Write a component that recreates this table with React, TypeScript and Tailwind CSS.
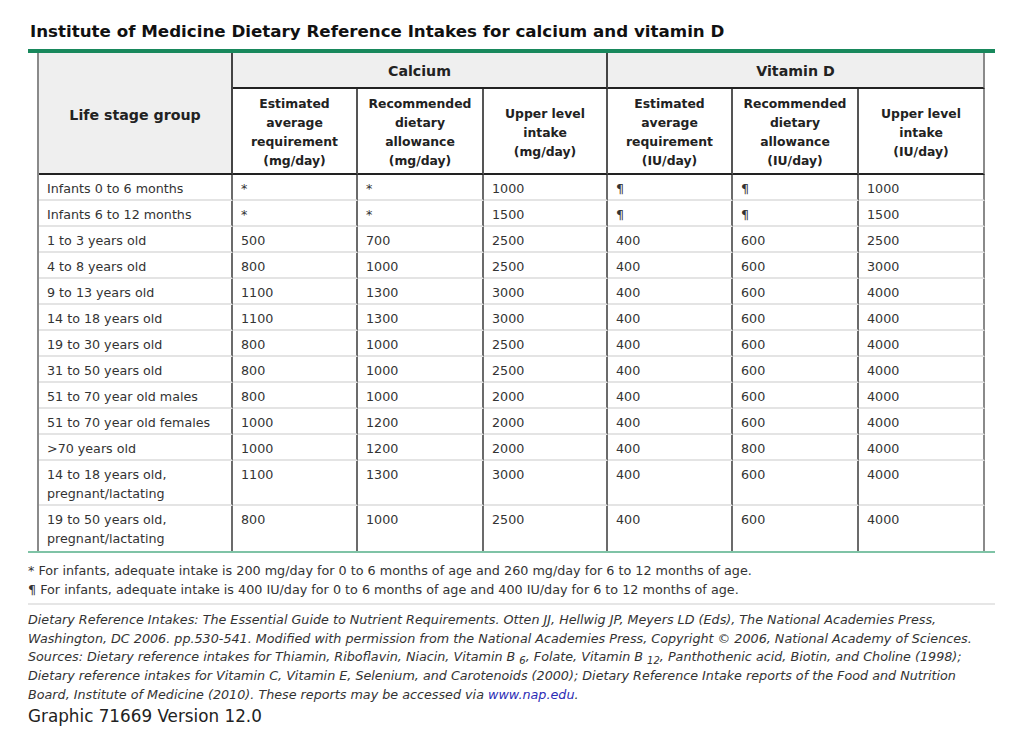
type Row = { group: string[]; values: string[] };

const rows: Row[] = [
  { group: ["Infants 0 to 6 months"], values: ["*", "*", "1000", "¶", "¶", "1000"] },
  { group: ["Infants 6 to 12 months"], values: ["*", "*", "1500", "¶", "¶", "1500"] },
  { group: ["1 to 3 years old"], values: ["500", "700", "2500", "400", "600", "2500"] },
  { group: ["4 to 8 years old"], values: ["800", "1000", "2500", "400", "600", "3000"] },
  { group: ["9 to 13 years old"], values: ["1100", "1300", "3000", "400", "600", "4000"] },
  { group: ["14 to 18 years old"], values: ["1100", "1300", "3000", "400", "600", "4000"] },
  { group: ["19 to 30 years old"], values: ["800", "1000", "2500", "400", "600", "4000"] },
  { group: ["31 to 50 years old"], values: ["800", "1000", "2500", "400", "600", "4000"] },
  { group: ["51 to 70 year old males"], values: ["800", "1000", "2000", "400", "600", "4000"] },
  { group: ["51 to 70 year old females"], values: ["1000", "1200", "2000", "400", "600", "4000"] },
  { group: [">70 years old"], values: ["1000", "1200", "2000", "400", "800", "4000"] },
  { group: ["14 to 18 years old,", "pregnant/lactating"], values: ["1100", "1300", "3000", "400", "600", "4000"] },
  { group: ["19 to 50 years old,", "pregnant/lactating"], values: ["800", "1000", "2500", "400", "600", "4000"] },
];

const subHeads: string[][] = [
  ["Estimated", "average", "requirement", "(mg/day)"],
  ["Recommended", "dietary", "allowance", "(mg/day)"],
  ["Upper level", "intake", "(mg/day)"],
  ["Estimated", "average", "requirement", "(IU/day)"],
  ["Recommended", "dietary", "allowance", "(IU/day)"],
  ["Upper level", "intake", "(IU/day)"],
];

export default function App() {
  return (
    <div className="w-[1024px] h-[750px] bg-white pl-[28px] pt-[21px] text-[#333] font-['DejaVu_Sans',Verdana,sans-serif]">
      <h1 className="pl-[2px] text-[16.7px] leading-[20px] font-bold text-[#111]">
        Institute of Medicine Dietary Reference Intakes for calcium and vitamin D
      </h1>
      <div className="mt-[8px] w-[967px] h-[4px] bg-[#18885c]" />

      <div className="ml-[9px] w-[948px] grid grid-cols-[194px_125px_126px_124px_125px_126px_126px] border-l-2 border-[#8a8a8a]">
        {/* header */}
        <div className="row-span-2 flex items-center justify-center bg-[#efefef] border-r-2 border-b-2 border-r-[#444] border-b-[#222] pt-[5px] text-[14.2px] font-bold text-[#222]">
          Life stage group
        </div>
        <div className="col-span-3 h-[36px] flex items-center justify-center bg-[#efefef] border-r-2 border-b-2 border-r-[#444] border-b-[#222] pt-[3px] text-[14.2px] font-bold text-[#222]">
          Calcium
        </div>
        <div className="col-span-3 h-[36px] flex items-center justify-center bg-[#efefef] border-r-2 border-b-2 border-r-[#8a8a8a] border-b-[#222] pt-[3px] text-[14.2px] font-bold text-[#222]">
          Vitamin D
        </div>
        {subHeads.map((lines, i) => (
          <div
            key={i}
            className={`h-[86px] flex flex-col items-center justify-center border-r-2 border-b-2 border-b-[#222] pt-[2px] text-[12.4px] leading-[19px] font-bold text-[#222] ${
              i === 5 ? "border-r-[#8a8a8a]" : "border-r-[#555]"
            }`}
          >
            {lines.map((l) => (
              <span key={l}>{l}</span>
            ))}
          </div>
        ))}

        {/* body */}
        {rows.map((row, r) => {
          const last = r === rows.length - 1;
          const cells = [row.group, ...row.values.map((v) => [v])];
          return cells.map((lines, c) => (
            <div
              key={`${r}-${c}`}
              className={`pl-[8px] pt-[4px] pb-[1px] text-[12.7px] leading-[19px] border-r-2 ${
                c === 6 ? "border-r-[#8a8a8a]" : "border-r-[#6b6b6b]"
              } ${last ? "pb-[3px]" : "border-b-2 border-b-[#e4e4e4]"}`}
            >
              {lines.map((l, k) => (
                <div key={k}>{l}</div>
              ))}
              {row.group.length > 1 && lines.length === 1 ? <div>&nbsp;</div> : null}
            </div>
          ));
        })}
      </div>
      <div className="w-[967px] h-[2px] bg-[#7fc3a6]" />

      <div className="mt-[8px] text-[12.75px] leading-[19px] text-[#333]">
        <p>* For infants, adequate intake is 200 mg/day for 0 to 6 months of age and 260 mg/day for 6 to 12 months of age.</p>
        <p>¶ For infants, adequate intake is 400 IU/day for 0 to 6 months of age and 400 IU/day for 6 to 12 months of age.</p>
      </div>
      <div className="mt-[4px] w-[967px] h-[2px] bg-[#e6e6e6]" />

      <p className="mt-[6px] italic text-[12.74px] leading-[18.7px] text-[#333]">
        Dietary Reference Intakes: The Essential Guide to Nutrient Requirements. Otten JJ, Hellwig JP, Meyers LD (Eds), The National Academies Press,
        <br />
        Washington, DC 2006. pp.530-541. Modified with permission from the National Academies Press, Copyright © 2006, National Academy of Sciences.
        <br />
        Sources: Dietary reference intakes for Thiamin, Riboflavin, Niacin, Vitamin B <sub className="text-[10px]">6</sub>, Folate, Vitamin B <sub className="text-[10px]">12</sub>, Panthothenic acid, Biotin, and Choline (1998);
        <br />
        Dietary reference intakes for Vitamin C, Vitamin E, Selenium, and Carotenoids (2000); Dietary Reference Intake reports of the Food and Nutrition
        <br />
        Board, Institute of Medicine (2010). These reports may be accessed via <span className="text-[#2b2bb5]">www.nap.edu</span>.
      </p>
      <p className="text-[16.8px] leading-[22px] text-[#222]">Graphic 71669 Version 12.0</p>
    </div>
  );
}
